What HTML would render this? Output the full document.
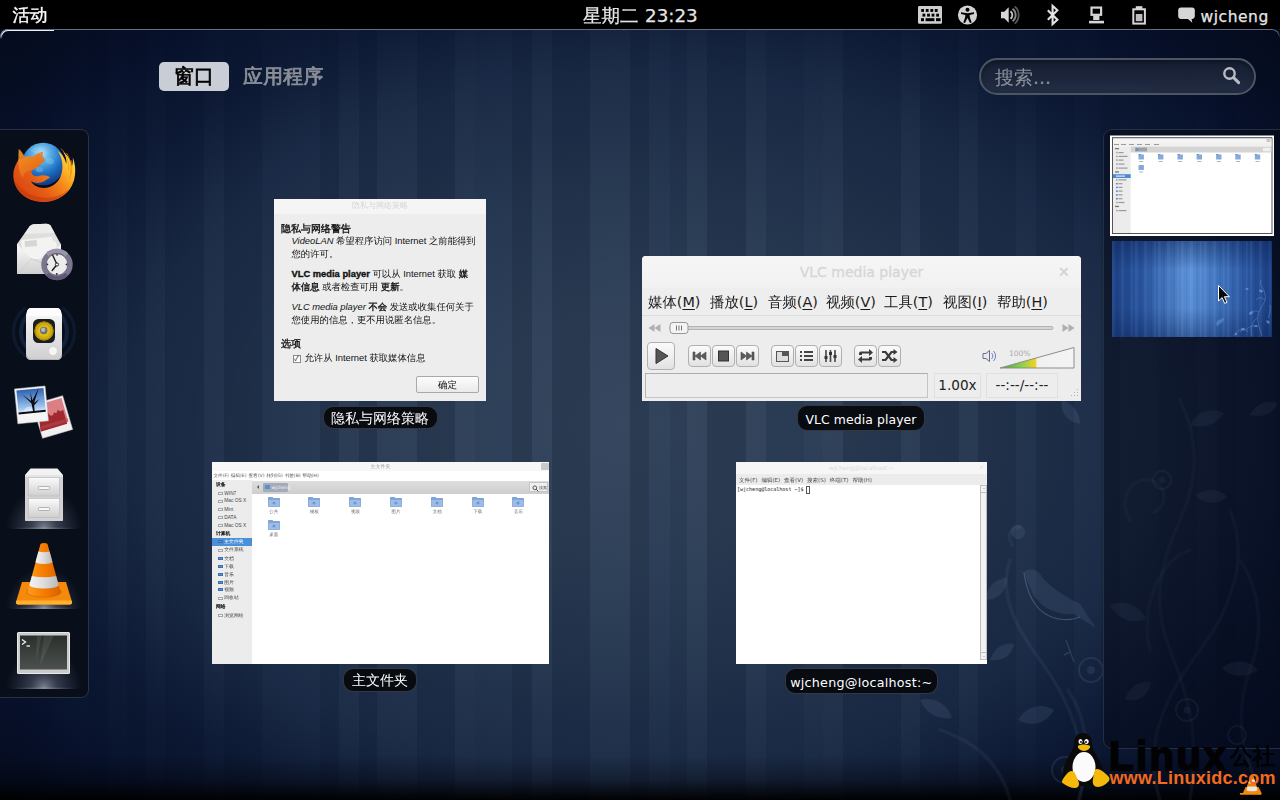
<!DOCTYPE html>
<html lang="zh-CN">
<head>
<meta charset="utf-8">
<title>活动 - GNOME Shell</title>
<style>
html,body{margin:0;padding:0;}
body{width:1280px;height:800px;overflow:hidden;position:relative;background:#14233f;
  font-family:"DejaVu Sans","WenQuanYi Zen Hei","Noto Sans CJK SC",sans-serif;color:#fff;}
.abs{position:absolute;}
#bg{left:0;top:0;width:1280px;height:800px;
  background:
   linear-gradient(to bottom, rgba(0,0,0,0) 0px, rgba(0,0,0,0) 755px, rgba(0,0,0,0.3) 780px, rgba(0,0,0,0.75) 794px, rgba(0,0,0,0.95) 800px),
   radial-gradient(ellipse 928px 640px at 640px 425px, rgba(3,20,56,0) 0%, rgba(3,20,56,0.09) 20%, rgba(3,17,49,0.227) 35%, rgba(3,17,49,0.477) 55%, rgba(3,14,42,0.77) 68%, rgba(3,12,38,0.91) 79%, rgba(3,10,30,0.955) 88%, rgba(3,7,22,1) 100%),
   linear-gradient(to right,rgba(255,255,255,0.030) 0px,rgba(255,255,255,0.030) 11.7px,rgba(0,0,0,0.040) 11.7px,rgba(0,0,0,0.040) 50.3px,rgba(255,255,255,0.014) 50.3px,rgba(255,255,255,0.014) 88.9px,rgba(0,0,0,0.085) 88.9px,rgba(0,0,0,0.085) 108.2px,rgba(255,255,255,0.030) 108.2px,rgba(255,255,255,0.030) 127.5px,rgba(0,0,0,0.085) 127.5px,rgba(0,0,0,0.085) 146px,rgba(255,255,255,0.030) 146px,rgba(255,255,255,0.030) 165px,rgba(0,0,0,0.085) 165px,rgba(0,0,0,0.085) 204px,rgba(255,255,255,0.030) 204px,rgba(255,255,255,0.030) 224px,rgba(0,0,0,0.085) 224px,rgba(0,0,0,0.085) 262.5px,rgba(255,255,255,0.014) 262.5px,rgba(255,255,255,0.014) 320px,rgba(0,0,0,0.085) 320px,rgba(0,0,0,0.085) 339px,rgba(255,255,255,0.030) 339px,rgba(255,255,255,0.030) 359px,rgba(0,0,0,0.085) 359px,rgba(0,0,0,0.085) 377.5px,rgba(255,255,255,0.030) 377.5px,rgba(255,255,255,0.030) 417.5px,rgba(0,0,0,0.085) 417.5px,rgba(0,0,0,0.085) 455px,rgba(255,255,255,0.030) 455px,rgba(255,255,255,0.030) 475px,rgba(255,255,255,0.014) 475px,rgba(255,255,255,0.014) 512.5px,rgba(0,0,0,0.085) 512.5px,rgba(0,0,0,0.085) 532.5px,rgba(255,255,255,0.030) 532.5px,rgba(255,255,255,0.030) 552.5px,rgba(0,0,0,0.085) 552.5px,rgba(0,0,0,0.085) 590px,rgba(255,255,255,0.030) 590px,rgba(255,255,255,0.030) 630px,rgba(0,0,0,0.085) 630px,rgba(0,0,0,0.085) 649px,rgba(255,255,255,0.014) 649px,rgba(255,255,255,0.014) 670px,rgba(0,0,0,0.040) 670px,rgba(0,0,0,0.040) 687.5px,rgba(255,255,255,0.030) 687.5px,rgba(255,255,255,0.030) 707.5px,rgba(0,0,0,0.085) 707.5px,rgba(0,0,0,0.085) 746px,rgba(255,255,255,0.030) 746px,rgba(255,255,255,0.030) 765.6px,rgba(0,0,0,0.040) 765.6px,rgba(0,0,0,0.040) 804px,rgba(255,255,255,0.014) 804px,rgba(255,255,255,0.014) 823px,rgba(255,255,255,0.030) 823px,rgba(255,255,255,0.030) 843px,rgba(0,0,0,0.085) 843px,rgba(0,0,0,0.085) 900.7px,rgba(255,255,255,0.030) 900.7px,rgba(255,255,255,0.030) 920px,rgba(0,0,0,0.085) 920px,rgba(0,0,0,0.085) 958.6px,rgba(255,255,255,0.030) 958.6px,rgba(255,255,255,0.030) 978px,rgba(0,0,0,0.085) 978px,rgba(0,0,0,0.085) 1016.5px,rgba(255,255,255,0.014) 1016.5px,rgba(255,255,255,0.014) 1036px,rgba(0,0,0,0.085) 1036px,rgba(0,0,0,0.085) 1074.4px,rgba(255,255,255,0.014) 1074.4px,rgba(255,255,255,0.014) 1101px,rgba(0,0,0,0.085) 1101px,rgba(0,0,0,0.085) 1120.3px,rgba(255,255,255,0.014) 1120.3px,rgba(255,255,255,0.014) 1158.9px,rgba(0,0,0,0.040) 1158.9px,rgba(0,0,0,0.040) 1197.5px,rgba(255,255,255,0.030) 1197.5px,rgba(255,255,255,0.030) 1216.8px,rgba(0,0,0,0.085) 1216.8px,rgba(0,0,0,0.085) 1236.1px,rgba(255,255,255,0.014) 1236.1px,rgba(255,255,255,0.014) 1274.7px,rgba(0,0,0,0.040) 1274.7px,rgba(0,0,0,0.040) 1280px),
   linear-gradient(#2f4159,#2f4159);
}
#panel{left:0;top:0;width:1280px;height:29px;background:#000;}
#panel .t{position:absolute;top:0;height:29px;line-height:29px;font-size:17px;color:#e6e6e6;white-space:nowrap;}
#frame{left:0;top:29px;width:1278px;height:40px;border-top:1.5px solid #5f6f85;border-left:1.5px solid #5f6f85;border-right:1.5px solid #5f6f85;border-radius:8px 8px 0 0;
 -webkit-mask-image:linear-gradient(to bottom,#000 0,#000 4px,transparent 9px);mask-image:linear-gradient(to bottom,#000 0,#000 4px,transparent 9px);}
#hot{left:0;top:28.5px;width:52px;height:12px;border-top:2.5px solid #f0f0f0;border-left:2.5px solid #f0f0f0;border-radius:8px 0 0 0;
 -webkit-mask-image:linear-gradient(to bottom,#000 0,#000 5px,transparent 10px);mask-image:linear-gradient(to bottom,#000 0,#000 5px,transparent 10px);}

#tabwin{left:159px;top:62px;width:70px;height:29px;border-radius:5px;background:#c9cdd5;color:#000;font-weight:bold;font-size:20px;line-height:29px;text-align:center;-webkit-text-stroke:0.7px #000;}
#tabapp{left:243px;top:62px;height:29px;line-height:29px;font-size:19.800px;color:#8b8f98;font-weight:bold;white-space:nowrap;-webkit-text-stroke:0.800px #8b8f98;letter-spacing:0.400px;}
#search{left:978.500px;top:58px;width:273.500px;height:32.500px;border:2px solid #4b5564;border-radius:18.500px;background:linear-gradient(to bottom,rgba(22,30,50,0.92),rgba(36,46,68,0.92));box-shadow:inset 0 2px 4px rgba(0,0,0,0.35);}
#search .ph{position:absolute;left:14.500px;top:0.500px;line-height:32px;font-size:19px;color:#8d939c;}
#dash{left:-2px;top:129px;width:89px;height:567px;border:1px solid #2b3342;border-radius:0 8px 8px 0;background:#090e1b;}
#ws{left:1103px;top:129px;width:190px;height:618px;border:1px solid #262f40;border-radius:9px 0 0 9px;background:rgba(4,7,18,0.42);}
.win{position:absolute;background:#ededed;overflow:hidden;}
.lbl{position:absolute;height:24px;line-height:24px;border-radius:10px;background:rgba(6,8,13,0.94);border:1px solid rgba(70,76,88,0.7);color:#fff;font-size:14px;text-align:center;white-space:nowrap;box-sizing:border-box;}

.b{font-weight:bold;-webkit-text-stroke:0.35px currentColor;}
#w1{color:#111;font-size:9.35px;line-height:13px;font-family:"Liberation Sans","WenQuanYi Zen Hei",sans-serif;}
#w1 .tb{position:absolute;left:0;top:0;width:100%;height:14.500px;background:#f5f5f5;color:#d6d6d6;font-size:8px;line-height:14px;text-align:center;}
#w1 p{position:absolute;margin:0;left:17.5px;width:190px;white-space:nowrap;}
#w1 i{font-style:italic;}
#w1 .btn{position:absolute;left:142px;top:177px;width:61px;height:15px;border:1px solid #a9a9a9;border-radius:2px;background:linear-gradient(#fdfdfd,#eaeaea);text-align:center;line-height:15px;font-size:9.6px;}
#w1 .cb{position:absolute;left:18.500px;top:155.600px;width:6px;height:6px;border:1px solid #8a8a8a;background:#fff;font-size:7px;line-height:6px;text-align:center;}

#w2{background:#ededed;border-radius:4px 4px 0 0;color:#1a1a1a;}
#w2 .tb{position:absolute;left:0;top:0;width:100%;height:32px;background:linear-gradient(#f6f6f6,#f1f1f1);color:#d6d6d6;font-size:14px;line-height:32px;text-align:center;}
#w2 .mb{position:absolute;left:0;top:32px;width:100%;height:27px;background:#eeeeee;border-bottom:1px solid #dcdcdc;font-size:14.4px;line-height:28px;}
#w2 .mb span{position:absolute;top:0;white-space:nowrap;}
#w2 .mb u{text-decoration:underline;text-underline-offset:2px;}
#w2 .bt{position:absolute;top:89px;height:20px;width:21px;border:1px solid #b0b0b0;border-radius:4px;background:linear-gradient(#fbfbfb,#e2e2e2);box-sizing:content-box;}
#w2 .bx{position:absolute;top:117px;height:23px;border:1px solid #c4c4c4;border-top-color:#adadad;border-left-color:#b4b4b4;background:#ededed;font-size:13.6px;line-height:23px;text-align:center;color:#222;}

#w3{font-size:4.8px;line-height:8px;color:#444;}
#w3 .tb{position:absolute;left:0;top:0;width:100%;height:9px;background:#f7f7f7;color:#9a9a9a;font-size:5px;line-height:9px;text-align:center;}
#w3 .mb{position:absolute;left:1.5px;top:9px;height:8px;line-height:9px;white-space:nowrap;word-spacing:0.5px;color:#555;font-size:4.6px;}
#w3 .sb{position:absolute;left:0;top:17.7px;width:39.5px;height:184.5px;background:#ececec;}
#w3 .sb div{font-family:"Liberation Sans","WenQuanYi Zen Hei",sans-serif;position:absolute;left:12.3px;white-space:nowrap;height:8px;line-height:8px;}
#w3 .sb div.h{left:4px;font-weight:bold;-webkit-text-stroke:0.25px #222;color:#222;}
#w3 .sb i{position:absolute;left:-6.3px;top:2.2px;width:4.5px;height:3px;border:0.5px solid #a5a5a5;background:#f6f6f6;box-sizing:border-box;}
#w3 .sb i.f{background:#5b8fd0;border-color:#3e6fb0;}
#w3 .tl{position:absolute;left:39.5px;top:18.5px;width:297.5px;height:13px;background:linear-gradient(#dedede,#cdcdcd);}
#w3 .fd{position:absolute;width:40px;text-align:center;top:46px;color:#666;font-size:4.4px;}
#w3 .fd svg{position:absolute;left:14px;top:-12px;}
#w4{font-size:5.5px;color:#333;}
#w4 .tb{position:absolute;left:0;top:0;width:100%;height:11.500px;background:#f6f6f6;color:#dadada;font-size:6px;line-height:11px;text-align:center;}
#w4 .mb{position:absolute;left:0;top:11.500px;width:100%;height:11.500px;line-height:12px;background:#ececec;white-space:nowrap;word-spacing:2.2px;text-indent:3px;color:#444;}
</style>
</head>
<body>
<div id="bg" class="abs"></div>
<div id="panel" class="abs">
  <div class="t" style="left:12.500px;top:1px;color:#fff;font-size:17.500px;-webkit-text-stroke:0.350px #fff;">活动</div>
  <div class="t" style="left:583px;top:0.500px;-webkit-text-stroke:0.250px #e6e6e6;"><span style="font-size:18.500px;">星期二</span><span style="margin-left:6.500px;font-size:18.300px;">23:23</span></div>
  <div class="t" style="left:1201px;font-size:15.500px;letter-spacing:0.550px;top:3px;left:1200.500px;-webkit-text-stroke:0.25px #e6e6e6;">wjcheng</div>
</div>

<svg class="abs" style="left:910px;top:0" width="300" height="29" viewBox="910 0 300 29">
 <!-- keyboard -->
 <rect x="918" y="6" width="24" height="17.800" rx="1.200" fill="#cfcfcf"/>
 <g fill="#000">
  <rect x="921.200" y="9" width="2.800" height="2.900"/><rect x="925.800" y="9" width="2.800" height="2.900"/><rect x="930.400" y="9" width="2.800" height="2.900"/><rect x="934.800" y="9" width="2.800" height="2.900"/>
  <rect x="922.500" y="13.700" width="2.800" height="2.900"/><rect x="927.100" y="13.700" width="2.800" height="2.900"/><rect x="931.600" y="13.700" width="2.800" height="2.900"/><rect x="936.200" y="13.700" width="2.800" height="2.900"/>
  <rect x="921" y="18.200" width="3" height="3"/><rect x="925.600" y="18.200" width="8.800" height="3"/><rect x="936" y="18.200" width="4.600" height="3"/>
 </g>
 <!-- accessibility -->
 <circle cx="967.500" cy="15" r="9.600" fill="#d2d2d2"/>
 <circle cx="967.500" cy="9.800" r="2" fill="#000"/>
 <path d="M961 12.200l6.500 1 6.500-1v1.800l-4.400 1 .3 2.500 1.800 5-1.700.6-2.500-5-2.500 5-1.700-.6 1.800-5 .3-2.500-4.400-1z" fill="#000"/>
 <!-- volume -->
 <path d="M1001 11.800h3.300l4.400-4.600v15.600l-4.400-4.600h-3.300z" fill="#d6d6d6"/>
 <path d="M1010.500 11.200a4.800 4.800 0 0 1 0 7.600" fill="none" stroke="#c8c8c8" stroke-width="1.800"/>
 <path d="M1012.600 8.700a8 8 0 0 1 0 12.600" fill="none" stroke="#8a8a8a" stroke-width="1.800"/>
 <path d="M1014.700 6.400a11.200 11.200 0 0 1 0 17.200" fill="none" stroke="#555" stroke-width="1.800"/>
 <!-- bluetooth -->
 <path d="M1047.800 10.200l9.600 9.600-4.800 4.400v-18.400l4.800 4.400-9.600 9.600" fill="none" stroke="#e4e4e4" stroke-width="2.100" stroke-linejoin="miter"/>
 <!-- network -->
 <rect x="1091.500" y="7.600" width="9.600" height="7.200" fill="none" stroke="#d6d6d6" stroke-width="2.200"/>
 <rect x="1093.200" y="15.500" width="6.200" height="4.500" fill="#d6d6d6"/>
 <rect x="1089" y="20.800" width="15" height="2.600" fill="#d6d6d6"/>
 <!-- battery -->
 <rect x="1135.800" y="6.200" width="6.600" height="3" fill="#d6d6d6"/>
 <rect x="1133.300" y="9.300" width="11.600" height="14.300" fill="none" stroke="#d6d6d6" stroke-width="2"/>
 <rect x="1135.800" y="14" width="6.600" height="7.200" fill="#bdbdbd"/>
 <!-- chat bubble -->
 <path d="M1181 7.500h11a2.800 2.800 0 0 1 2.800 2.800v5.800a2.800 2.800 0 0 1-2.800 2.800h-.5l.8 3.800-4.300-3.800h-7a2.800 2.800 0 0 1-2.800-2.800v-5.800a2.800 2.800 0 0 1 2.800-2.800z" fill="#d6d6d6"/>
</svg>
<div id="hot" class="abs"></div>
<div id="frame" class="abs"></div>


<svg id="floral" class="abs" style="left:880px;top:380px" width="400" height="420" viewBox="880 380 400 420">
<g fill="none" stroke="#8aa4d0" stroke-opacity="0.070" stroke-width="3.500" stroke-linecap="round">
 <path d="M1180 400c20 40 18 80 0 120s-30 80-10 130 30 90 20 150"/>
 <path d="M1160 800c-20-60 10-110 40-150s50-90 30-140"/>
 <path d="M1130 520c-12-20 0-42 18-40s22 26 6 32"/>
 <path d="M1150 650c-10-40 8-90 40-100"/>
 <path d="M1080 800c10-50-10-100-40-140s-40-70-30-100"/>
 <path d="M1010 800c-10-40-40-60-70-70"/>
 <path d="M1068 690c20 30 24 70 10 110"/>
 <path d="M1240 560c20 30 25 70 10 110s-10 80 10 120"/>
 <path d="M1012 545c-6-10 0-20 8-18"/>
</g>
<g fill="none" stroke="#8aa4d0" stroke-opacity="0.130" stroke-width="2">
 <circle cx="1162" cy="480" r="9"/><circle cx="1091" cy="670" r="12"/><circle cx="1187" cy="710" r="11"/><circle cx="1065" cy="770" r="13"/><circle cx="1237" cy="735" r="9"/>
</g>
<g fill="#8aa4d0" fill-opacity="0.120">
 <circle cx="1162" cy="480" r="3"/><circle cx="1091" cy="670" r="4"/><circle cx="1187" cy="710" r="3.500"/><circle cx="1065" cy="770" r="4"/><circle cx="1018" cy="532" r="7"/>
 <path d="M1062 400c12 4 18 14 18 24-12-2-20-10-18-24z"/>
 <path d="M1190 425c8-14 22-18 34-12-8 12-20 16-34 12z"/>
 <path d="M1250 415c6-12 18-16 28-12-6 12-16 15-28 12z"/>
 <path d="M1195 495c12-8 26-6 32 2-10 8-22 8-32-2z"/>
 <path d="M985 600c2-14 12-22 22-22 0 12-8 22-22 22z"/>
 <path d="M1110 605c14-6 30 0 36 14-14 6-28 0-36-14z"/>
 <path d="M1222 668c12-10 28-8 36 2-12 8-26 8-36-2z"/>
 <path d="M1018 720c8-14 24-18 36-10-8 14-22 18-36 10z"/>
 <path d="M920 700c14-4 28 4 32 18-14 2-26-4-32-18z"/>
 <path d="M990 660c4-12 14-18 24-16-2 12-12 18-24 16z"/>
 <path d="M1125 700c4-14 16-20 26-18-2 14-12 20-26 18z"/>
 <path d="M1016 571l8 1c4-4 12-4 16 2 8 12 24 22 40 30l16 24-22-14c-16 2-34-6-42-22-4-8-6-14-8-19z"/>
</g>
<path d="M1024 573c2 14 6 30 20 40 12 8 26 8 36 4" fill="none" stroke="#a9bfe4" stroke-opacity="0.250" stroke-width="1.200"/>
<path d="M1066 640l8 22M1070 652l-6 3" fill="none" stroke="#8aa4d0" stroke-opacity="0.180" stroke-width="1.500"/>
</svg>
<div id="tabwin" class="abs">窗口</div>
<div id="tabapp" class="abs">应用程序</div>
<div id="search" class="abs"><span class="ph">搜索...</span>
<svg class="abs" style="left:240.500px;top:5.200px" width="22" height="22" viewBox="0 0 22 22"><circle cx="8.5" cy="8.5" r="5.2" fill="none" stroke="#b9bcc2" stroke-width="2.4"/><path d="M12.6 12.6 L17.6 17.6" stroke="#b9bcc2" stroke-width="3" stroke-linecap="round"/></svg>
</div>
<div id="dash" class="abs"></div>

<svg id="dashicons" class="abs" style="left:0;top:130px" width="88" height="568" viewBox="0 130 88 568">
<defs>
 <radialGradient id="ffg" cx="0.45" cy="0.25" r="0.8"><stop offset="0" stop-color="#bfe6f7"/><stop offset="0.25" stop-color="#5fb3e6"/><stop offset="0.6" stop-color="#1f6fc4"/><stop offset="1" stop-color="#0d2f7a"/></radialGradient>
 <linearGradient id="fox" x1="0.05" y1="0.85" x2="0.95" y2="0.2"><stop offset="0" stop-color="#d5430f"/><stop offset="0.35" stop-color="#e65c16"/><stop offset="0.62" stop-color="#f58618"/><stop offset="0.85" stop-color="#fdbb2a"/><stop offset="1" stop-color="#ffdc45"/></linearGradient>
 <linearGradient id="foxh" x1="0" y1="0" x2="1" y2="1"><stop offset="0" stop-color="#f79a2a"/><stop offset="1" stop-color="#e0570f"/></linearGradient>
 <radialGradient id="glow" cx="0.5" cy="1" r="0.5" gradientTransform="matrix(1 0 0 2 0 -1)"><stop offset="0" stop-color="#d0d4e0" stop-opacity="0.6"/><stop offset="0.35" stop-color="#8e96ae" stop-opacity="0.34"/><stop offset="0.75" stop-color="#8088a0" stop-opacity="0.12"/><stop offset="1" stop-color="#8088a0" stop-opacity="0"/></radialGradient>
 <linearGradient id="gline" x1="0" y1="0" x2="1" y2="0"><stop offset="0" stop-color="#cfd4e2" stop-opacity="0"/><stop offset="0.5" stop-color="#dfe3ee" stop-opacity="0.55"/><stop offset="1" stop-color="#cfd4e2" stop-opacity="0"/></linearGradient>
 <linearGradient id="wht" x1="0" y1="0" x2="0" y2="1"><stop offset="0" stop-color="#fbfbfb"/><stop offset="1" stop-color="#cfcfcf"/></linearGradient>
 <linearGradient id="cone" x1="0" y1="0" x2="1" y2="0"><stop offset="0" stop-color="#ff9d1c"/><stop offset="0.5" stop-color="#f57c00"/><stop offset="1" stop-color="#d95f00"/></linearGradient>
 <linearGradient id="conew" x1="0" y1="0" x2="1" y2="0"><stop offset="0" stop-color="#f4f4f4"/><stop offset="0.5" stop-color="#dcdcdc"/><stop offset="1" stop-color="#b9b9b9"/></linearGradient>
 <linearGradient id="scr" x1="0" y1="0" x2="0" y2="1"><stop offset="0" stop-color="#2a2f2c"/><stop offset="1" stop-color="#4b514e"/></linearGradient>
 <linearGradient id="sky" x1="0" y1="0" x2="0" y2="1"><stop offset="0" stop-color="#2f62b0"/><stop offset="0.75" stop-color="#9cc3ee"/><stop offset="1" stop-color="#e8f2fb"/></linearGradient>
</defs>
<!-- firefox -->
<circle cx="43.200" cy="164" r="21.300" fill="url(#ffg)"/>
<path d="M30 150c3-3 8-4 12-3 3 2 2 5-1 6-4 1-8 0-11-3zM46 158c3-1 7 0 8 3 0 3-3 4-6 3-2-1-3-4-2-6zM36 168c2-2 6-1 7 1s-2 4-5 3c-2 0-3-2-2-4z" fill="#8fd0f0" opacity="0.350"/>
<path d="M18.800 149c.3 2.500 1.200 5 3 7-5 5-8.500 12-8.500 20 .5 14 12 25.500 29 26 15 .3 27.500-8 31.500-21 2.500-9 1.500-17-1-23.500.3 3.500 0 6.500-1 9-1-6-4-11.500-8.500-14.500 2.500 4 3.500 8 3 12-1-5-4-10-8.500-13 4.500 7 5.500 14.500 4 21.500-2 10-10 15.500-18 15.500-6 0-11-3-13-7 4 2.500 9 2.500 13 .5 2.500-1.500 4-3.500 6.500-4-3.500-2.500-8-3-11.500-1.500-3.500 1-6.500-.5-7.500-3.500 0-3 2.500-4.500 5.500-4.500 1-2 3-4 5.500-5l-1.500-3c-1.500-2-1.500-4-.5-6-4.500.5-8 2.500-10 5-3.500-1-7-1-9.500-.200-1.500-3-1.500-6-2-9z" fill="url(#fox)"/>
<path d="M18.800 149c2.500 2 4.500 4.500 5.500 7.500 2.500-.8 6-.8 9 .200 2-2.500 5.500-4.500 10-5-1 2-1 4 .5 6l1.500 3c-2.500 1-4.500 3-5.500 5-3 0-5.500 1.500-5.500 4.500-6-1-10.500 2-11.500 8-3.500-6-5-12.500-4.500-18 .3-3.500 0-7 .5-11.200z" fill="url(#foxh)" opacity="0.850"/>
<path d="M61 148.500c5 5 8.500 13 7.500 22M66.500 153c4 6 5.500 14 3.500 22M71 160c1.500 6 1 13-1.500 19" fill="none" stroke="#f08a10" stroke-width="1" opacity="0.700"/>
<path d="M13.500 178c2 12 13 22.500 28.500 23.500 11 .5 21-4 27-12-7 6-16 9-26 8-14-1-25-9-29.500-19.500z" fill="#c22f0c" opacity="0.450"/>
<!-- mail + clock -->
<path d="M17 244l12.500-17.500q1.500-2 4-2.200l13-.600q2.500 0 4 1.800l10.500 19v29h-44z" fill="#dededc"/>
<path d="M29.500 226.500q1.500-2 4-2.200l13-.600q2.500 0 4 1.800l4 7.500-30 1z" fill="#ececea"/>
<path d="M21 240l33-3.500 3 8.500-4 14h-30z" fill="#f3f3f1"/>
<path d="M24.500 241.300l12-1.200.6 5.800-12 1.200z" fill="#d6d6d6"/>
<path d="M52 236.500l4 1.500 1 5-5-3z" fill="#e2e2e0"/>
<path d="M17 243.800l13.500 14.500 4 2.500 9-4 17.500-12v29.200h-44z" fill="url(#wht)"/>
<path d="M17.500 273.500l14-14.500M30.500 258.300l12 5" stroke="#c8c8c6" stroke-width="0.700" fill="none"/>
<circle cx="57" cy="264.500" r="15.700" fill="#7b768f"/>
<path d="M45.900 253.400a15.700 15.700 0 0 1 22.200 0l-2.800 2.800a11.700 11.700 0 0 0-16.600 0z" fill="#9a95ac"/>
<path d="M68.100 275.600a15.700 15.700 0 0 1-22.200 0l2.800-2.800a11.700 11.700 0 0 0 16.600 0z" fill="#5d5873"/>
<circle cx="57" cy="264.500" r="10.800" fill="#ececec" stroke="#55506a" stroke-width="0.800"/>
<path d="M57 264.500l-4.300-9.200M57 264.500l-4.800 6" stroke="#1c1c1c" stroke-width="1.400" stroke-linecap="round"/>
<circle cx="57" cy="264.500" r="1.600" fill="#f4f4f4" stroke="#1c1c1c" stroke-width="0.900"/>
<g fill="#2a2a2a"><circle cx="57" cy="254.800" r="0.900"/><circle cx="56.800" cy="274" r="0.900"/><circle cx="47.400" cy="264.400" r="0.900"/><circle cx="66.500" cy="264.400" r="0.900"/></g>
<!-- rhythmbox -->
<g fill="none" stroke="#1b3358" opacity="0.550" stroke-linecap="round"><path d="M58.800 314.400a23 23 0 0 1 0 35.200M29.200 314.400a23 23 0 0 0 0 35.200" stroke-width="4"/><path d="M63.600 308.600a30.500 30.500 0 0 1 0 46.800M24.400 308.600a30.500 30.500 0 0 0 0 46.800" stroke-width="3" opacity="0.600"/></g>
<path d="M31 308h26q3 0 4 3.500l1 5v38q0 5.500-5.500 5.500h-25q-5.500 0-5.500-5.500v-38l1-5q1-3.500 4-3.500z" fill="url(#wht)"/>
<path d="M31 308h26q3 0 4 3.500l1 4.500h-36l1-4.500q1-3.500 4-3.500z" fill="#fdfdfd"/>
<path d="M26.500 354.500q0 5 5 5h25q5 0 5-5" fill="none" stroke="#b5b5b5" stroke-width="1"/>
<rect x="33" y="319" width="22" height="24" rx="5.500" fill="#1c1d22"/>
<circle cx="44" cy="331" r="9.600" fill="#cfaa0e"/>
<circle cx="44" cy="331" r="9.100" fill="none" stroke="#9c7f00" stroke-width="1"/>
<circle cx="44" cy="331" r="6" fill="#dfbd1a"/>
<circle cx="43.700" cy="330.500" r="3.700" fill="#6f6f6f"/><circle cx="43.200" cy="329.800" r="2.200" fill="#b4b8b8"/>
<circle cx="53" cy="351" r="4.400" fill="#f6f6f6" stroke="#d2d2d2" stroke-width="0.800"/>
<!-- shotwell -->
<g transform="translate(52.600 417) rotate(-16.500)"><rect x="-15.700" y="-17.600" width="31.400" height="35.200" fill="#f0f0f0" stroke="#c4c4c4" stroke-width="0.500"/><rect x="-13.900" y="-15.800" width="27.800" height="24.500" fill="#dc7f84"/><path d="M-13.900 1l2.500-1.500 1.500 1 1.500-3 1.500 2 2-1 1.500-4.500 1.500 4 2.500.5 2-2.500 2 1.500 2.500-3 2 2.500 3 -1v14.700h-27.800z" fill="#9e2a30"/><path d="M-13.900 5.500h27.800v3.200h-27.800z" fill="#b8464c" opacity="0.600"/></g>
<g transform="translate(31.450 404.900) rotate(-5.500)"><rect x="-15.350" y="-17.500" width="30.700" height="35" fill="#f4f4f4" stroke="#c9c9c9" stroke-width="0.500"/><rect x="-13.600" y="-15.700" width="27.200" height="24" fill="url(#sky)"/><circle cx="-3" cy="6.500" r="5" fill="#fff" opacity="0.450"/><path d="M-13.600 6.300h27.200v2h-27.200z" fill="#0b0d12"/><path d="M1 6.500l-.8-8-8-9.500 7.800 7 .2-9 1.200 8.500 7.500-11.500-6 14 5.500-3-5.800 5.800v5.700z" fill="#0b0d12"/></g>
<!-- file cabinet -->
<rect x="6" y="488" width="76" height="40.500" fill="url(#glow)"/><rect x="10" y="527.800" width="68" height="1" fill="url(#gline)"/>
<path d="M30.500 468.500h27l5.500 6.500h-38z" fill="#f2f2f2"/>
<rect x="25" y="475" width="38" height="46" rx="0.800" fill="#d2d2d2"/>
<rect x="25" y="475" width="38" height="2" fill="#e4e4e4"/>
<rect x="28.500" y="477.500" width="31" height="18.500" fill="url(#wht)" stroke="#b8b8b8" stroke-width="0.600"/>
<rect x="28.500" y="498.500" width="31" height="19" fill="url(#wht)" stroke="#b8b8b8" stroke-width="0.600"/>
<rect x="38.500" y="486.500" width="11" height="3" rx="0.800" fill="#f8f8f8" stroke="#9a9a9a" stroke-width="0.700"/>
<rect x="38.500" y="507.500" width="11" height="3" rx="0.800" fill="#f8f8f8" stroke="#9a9a9a" stroke-width="0.700"/>
<!-- vlc -->
<rect x="6" y="568" width="76" height="40.500" fill="url(#glow)"/><rect x="10" y="607.800" width="68" height="1" fill="url(#gline)"/>
<path d="M22 582h44l6 20a2 2 0 0 1-2 2.500h-52a2 2 0 0 1-2-2.500z" fill="#f58a0a"/>
<path d="M16.500 600.500h55l.5 2a2 2 0 0 1-2 2h-52a2 2 0 0 1-2-2z" fill="#ffb12e"/>
<ellipse cx="44" cy="592" rx="17.500" ry="5.500" fill="#d96a00"/>
<path d="M40.200 545a3.800 2 0 0 1 7.600 0l12.700 47a16.500 4.800 0 0 1-33 0z" fill="url(#cone)"/>
<path d="M38.400 551.500q5.600 1.500 11.200 0l2.900 10.500a8.700 2.500 0 0 1-17 0z" fill="url(#conew)"/>
<path d="M31.900 576q12 2.500 24.200 0l2.500 9a14.500 3.500 0 0 1-29.200 0z" fill="url(#conew)"/>
<!-- terminal -->
<rect x="6" y="648" width="76" height="40.500" fill="url(#glow)"/><rect x="10" y="687.800" width="68" height="1" fill="url(#gline)"/>
<rect x="17" y="632" width="53" height="42" rx="1.500" fill="#cbcbcb"/>
<rect x="17.500" y="632.500" width="52" height="41" rx="1.500" fill="none" stroke="#e9e9e9" stroke-width="1"/>
<rect x="20" y="635.500" width="47" height="34" fill="url(#scr)"/>
<path d="M37 635.500h5l-6 26zM44 635.500h10l-14 30z" fill="#fff" opacity="0.080"/>
<path d="M22 639.500l3.500 2.500-3.500 2.500" fill="none" stroke="#f0f0f0" stroke-width="1.300"/>
<path d="M26.500 646h3.500" stroke="#f0f0f0" stroke-width="1.300"/>
</svg>
<div id="ws" class="abs"></div>


<svg class="abs" style="left:1104px;top:130px" width="176" height="215" viewBox="1104 130 176 215">
<defs>
 <linearGradient id="wp" x1="0" y1="0" x2="1" y2="0"><stop offset="0" stop-color="#1d4388"/><stop offset="0.2" stop-color="#2c5aa6"/><stop offset="0.48" stop-color="#5f97e0"/><stop offset="0.62" stop-color="#4a80cc"/><stop offset="0.85" stop-color="#2a58a4"/><stop offset="1" stop-color="#1c4186"/></linearGradient>
 <linearGradient id="wpv" x1="0" y1="0" x2="0" y2="1"><stop offset="0" stop-color="#0c245a" stop-opacity="0.55"/><stop offset="0.3" stop-color="#0c245a" stop-opacity="0.05"/><stop offset="0.7" stop-color="#0c245a" stop-opacity="0.1"/><stop offset="1" stop-color="#0c245a" stop-opacity="0.5"/></linearGradient>
 <pattern id="wps" x="1112" y="0" width="23" height="10" patternUnits="userSpaceOnUse"><rect x="0" y="0" width="2.500" height="10" fill="#fff" opacity="0.060"/><rect x="5" y="0" width="1.500" height="10" fill="#000" opacity="0.060"/><rect x="9" y="0" width="3" height="10" fill="#fff" opacity="0.050"/><rect x="15" y="0" width="2" height="10" fill="#000" opacity="0.050"/><rect x="19" y="0" width="1.500" height="10" fill="#fff" opacity="0.060"/></pattern>
</defs>
<rect x="1111" y="136.500" width="162" height="98.500" fill="none" stroke="#fff" stroke-width="2"/>
<rect x="1112.500" y="138" width="159.500" height="95.500" fill="#fff" stroke="#555" stroke-width="1"/>
<rect x="1113" y="138.500" width="158.500" height="4" fill="#f4f4f4"/>
<rect x="1266.500" y="138.500" width="4" height="3.500" fill="#c9c9c9"/>
<rect x="1113" y="142.500" width="158.500" height="3.800" fill="#f0f0f0"/>
<g fill="#9c9c9c"><rect x="1114" y="144" width="5" height="1"/><rect x="1121" y="144" width="5" height="1"/><rect x="1129" y="144" width="5" height="1"/><rect x="1137" y="144" width="5" height="1"/><rect x="1145" y="144" width="5" height="1"/><rect x="1154" y="144" width="5" height="1"/></g>
<rect x="1113" y="146.300" width="17.700" height="86.700" fill="#ececec"/>
<rect x="1130.700" y="146.500" width="140.800" height="6" fill="#d4d4d4"/>
<rect x="1135" y="147.500" width="12" height="4" fill="#9ea3aa"/><rect x="1136" y="148.300" width="2.500" height="2.400" fill="#5b8fd0"/>
<rect x="1262.500" y="147.300" width="8.500" height="4.500" fill="#f0f0f0" stroke="#c4c4c4" stroke-width="0.400"/>
<rect x="1138.5" y="154.500" width="5.400" height="5" fill="#86a9d8"/><rect x="1138.5" y="154" width="2.400" height="1" fill="#6d93c8"/><rect x="1139.2" y="161" width="4" height="1" fill="#b5b5b5"/><rect x="1158.0" y="154.500" width="5.400" height="5" fill="#86a9d8"/><rect x="1158.0" y="154" width="2.400" height="1" fill="#6d93c8"/><rect x="1158.7" y="161" width="4" height="1" fill="#b5b5b5"/><rect x="1177.5" y="154.500" width="5.400" height="5" fill="#86a9d8"/><rect x="1177.5" y="154" width="2.400" height="1" fill="#6d93c8"/><rect x="1178.2" y="161" width="4" height="1" fill="#b5b5b5"/><rect x="1196.6" y="154.500" width="5.400" height="5" fill="#86a9d8"/><rect x="1196.6" y="154" width="2.400" height="1" fill="#6d93c8"/><rect x="1197.3" y="161" width="4" height="1" fill="#b5b5b5"/><rect x="1216.1" y="154.500" width="5.400" height="5" fill="#86a9d8"/><rect x="1216.1" y="154" width="2.400" height="1" fill="#6d93c8"/><rect x="1216.8" y="161" width="4" height="1" fill="#b5b5b5"/><rect x="1235.3" y="154.500" width="5.400" height="5" fill="#86a9d8"/><rect x="1235.3" y="154" width="2.400" height="1" fill="#6d93c8"/><rect x="1236.0" y="161" width="4" height="1" fill="#b5b5b5"/><rect x="1254.8" y="154.500" width="5.400" height="5" fill="#86a9d8"/><rect x="1254.8" y="154" width="2.400" height="1" fill="#6d93c8"/><rect x="1255.5" y="161" width="4" height="1" fill="#b5b5b5"/><rect x="1138.500" y="165" width="5.400" height="5" fill="#86a9d8"/><rect x="1139.200" y="171.500" width="4" height="1" fill="#b5b5b5"/>
<rect x="1115" y="148.0" width="4" height="1.300" fill="#777"/><rect x="1116" y="151.8" width="1.800" height="1.600" fill="#aaa"/><rect x="1118.500" y="152.0" width="5" height="1.200" fill="#9a9a9a"/><rect x="1116" y="155.60000000000002" width="1.800" height="1.600" fill="#aaa"/><rect x="1118.500" y="155.8" width="9" height="1.200" fill="#9a9a9a"/><rect x="1116" y="159.3" width="1.800" height="1.600" fill="#aaa"/><rect x="1118.500" y="159.5" width="5" height="1.200" fill="#9a9a9a"/><rect x="1116" y="163.3" width="1.800" height="1.600" fill="#aaa"/><rect x="1118.500" y="163.5" width="6" height="1.200" fill="#9a9a9a"/><rect x="1116" y="167.3" width="1.800" height="1.600" fill="#aaa"/><rect x="1118.500" y="167.5" width="9" height="1.200" fill="#9a9a9a"/><rect x="1115" y="171.3" width="4" height="1.300" fill="#777"/><rect x="1113" y="174.2" width="17.700" height="3.800" fill="#4a8ad4"/><rect x="1116" y="175.5" width="9" height="1.200" fill="#dfeaf8"/><rect x="1116" y="179.10000000000002" width="1.800" height="1.600" fill="#aaa"/><rect x="1118.500" y="179.3" width="8" height="1.200" fill="#9a9a9a"/><rect x="1116" y="182.9" width="1.800" height="1.600" fill="#5b8fd0"/><rect x="1118.500" y="183.1" width="4" height="1.200" fill="#9a9a9a"/><rect x="1116" y="186.60000000000002" width="1.800" height="1.600" fill="#5b8fd0"/><rect x="1118.500" y="186.8" width="4" height="1.200" fill="#9a9a9a"/><rect x="1116" y="190.3" width="1.800" height="1.600" fill="#5b8fd0"/><rect x="1118.500" y="190.5" width="4" height="1.200" fill="#9a9a9a"/><rect x="1116" y="194.10000000000002" width="1.800" height="1.600" fill="#5b8fd0"/><rect x="1118.500" y="194.3" width="4" height="1.200" fill="#9a9a9a"/><rect x="1116" y="197.9" width="1.800" height="1.600" fill="#5b8fd0"/><rect x="1118.500" y="198.1" width="4" height="1.200" fill="#9a9a9a"/><rect x="1116" y="201.70000000000002" width="1.800" height="1.600" fill="#aaa"/><rect x="1118.500" y="201.9" width="6" height="1.200" fill="#9a9a9a"/><rect x="1115" y="205.8" width="4" height="1.300" fill="#777"/><rect x="1116" y="209.8" width="1.800" height="1.600" fill="#aaa"/><rect x="1118.500" y="210.0" width="8" height="1.200" fill="#9a9a9a"/>
<rect x="1112" y="241" width="160" height="96" fill="url(#wp)"/>
<rect x="1112" y="241" width="160" height="96" fill="url(#wpv)"/><rect x="1112" y="241" width="160" height="96" fill="url(#wps)"/>
<g fill="none" stroke="#6f9ad6" stroke-width="0.700" opacity="0.600">
 <path d="M1262 336c-3-10-6-16-3-24s8-10 6-18-6-8-4-14"/>
 <path d="M1252 336c-2-8 0-14 5-18M1246 330c3-4 8-5 12-3M1259 312c-4-2-8-1-10 2M1265 300c-3-3-7-3-9 0M1268 318c2-4 3-9 2-13"/>
 <path d="M1240 332c3-3 6-3 8 0M1234 336c2-5 6-7 10-6"/>
</g>
<g fill="#7ea6dc" opacity="0.600"><ellipse cx="1251" cy="313" rx="2.200" ry="1.400" transform="rotate(-30 1251 313)"/><ellipse cx="1261" cy="291" rx="2.200" ry="1.300" transform="rotate(20 1261 291)"/><ellipse cx="1268" cy="322" rx="2" ry="1.300" transform="rotate(40 1268 322)"/><ellipse cx="1243" cy="329" rx="2" ry="1.200"/><ellipse cx="1247" cy="289" rx="1.600" ry="1"/><ellipse cx="1256" cy="326" rx="1.600" ry="1"/><circle cx="1236" cy="334" r="1.200"/>
 <path d="M1216 323c2-3 4-4 6-4l1.500-1.500.5 1.500c0 2-2 4-4 4.500l-3 3z" fill="#5f8fd0"/></g>
<!-- cursor -->
<path d="M1218.500 285.500v15.500l3.600-3.400 2.600 5.800 2.300-1-2.600-5.700h5z" fill="#0a0a0a" stroke="#fff" stroke-width="1" stroke-linejoin="round"/>
</svg>
<div id="w1" class="win" style="left:274px;top:199px;width:212px;height:202px;">
<div class="tb">隐私与网络策略</div>
<p class="b" style="left:7px;top:22.700px;font-size:10px;">隐私与网络警告</p>
<p style="top:36.200px;"><i>VideoLAN</i> 希望程序访问 Internet 之前能得到<br>您的许可。</p>
<p style="top:69.200px;"><span class="b">VLC media player</span> 可以从 Internet 获取 <span class="b">媒</span><br><span class="b">体信息</span> 或者检查可用 <span class="b">更新</span>。</p>
<p style="top:101.700px;"><i>VLC media player</i> <span class="b">不会</span> 发送或收集任何关于<br>您使用的信息，更不用说匿名信息。</p>
<p class="b" style="left:7px;top:137.700px;font-size:10px;">选项</p>
<div class="cb">✓</div>
<p style="left:30.500px;top:152.700px;">允许从 Internet 获取媒体信息</p>
<div class="btn">确定</div>
</div>
<div class="lbl" style="left:322.500px;top:405.500px;width:115px;height:23.500px;line-height:22px;">隐私与网络策略</div>

<div id="w2" class="win" style="left:642px;top:256px;width:439px;height:145px;">
<div class="tb" style="-webkit-text-stroke:0.3px #d6d6d6">VLC media player<span style="position:absolute;left:416px;top:0;font-size:14px;color:#d0d0d0;">✕</span></div>
<div class="mb"><span style="left:6px">媒体(<u>M</u>)</span><span style="left:68px">播放(<u>L</u>)</span><span style="left:126px">音频(<u>A</u>)</span><span style="left:184px">视频(<u>V</u>)</span><span style="left:242px">工具(<u>T</u>)</span><span style="left:301px">视图(<u>I</u>)</span><span style="left:355px">帮助(<u>H</u>)</span></div>
<svg class="abs" style="left:0;top:60px" width="439" height="26" viewBox="0 0 439 26">
 <path d="M12.5 8v8l-6-4zM18.500 8v8l-6-4z" fill="#b0b0b0"/>
 <rect x="28" y="10.500" width="383" height="3" rx="1.500" fill="#d4d4d4" stroke="#a6a6a6" stroke-width="0.800"/>
 <rect x="28" y="6.5" width="18" height="11" rx="3" fill="#f4f4f4" stroke="#979797" stroke-width="1"/>
 <path d="M34.5 9.5v5M37 9.5v5M39.500 9.500v5" stroke="#777" stroke-width="1"/>
 <path d="M420.500 8v8l6-4zM426.500 8v8l6-4z" fill="#b0b0b0"/>
</svg>
<div class="bt" style="left:5px;top:86px;width:26px;height:26px;"><svg width="26" height="26" viewBox="0 0 26 26"><path d="M8 5.500v15l12-7.500z" fill="#555" stroke="#333" stroke-width="1"/></svg></div>
<div class="bt" style="left:46px"><svg width="21" height="20" viewBox="0 0 21 20"><path d="M4 6h2v8h-2zM11.500 6v8l-5.500-4zM17 6v8l-5.500-4z" fill="#5c5c5c" stroke="#4a4a4a" stroke-width="0.6"/></svg></div>
<div class="bt" style="left:70px"><svg width="21" height="20" viewBox="0 0 21 20"><rect x="5.500" y="5" width="10" height="10" fill="#555" stroke="#333"/></svg></div>
<div class="bt" style="left:94px"><svg width="21" height="20" viewBox="0 0 21 20"><path d="M15 6h2v8h-2zM4 6v8l5.500-4zM9.500 6v8l5.500-4z" fill="#5c5c5c" stroke="#4a4a4a" stroke-width="0.6"/></svg></div>
<div class="bt" style="left:129px"><svg width="21" height="20" viewBox="0 0 21 20"><rect x="4.500" y="5.500" width="12" height="10" fill="#ddd" stroke="#555"/><rect x="10" y="6" width="6" height="4" fill="#555"/></svg></div>
<div class="bt" style="left:153px"><svg width="21" height="20" viewBox="0 0 21 20"><path d="M4 5h2v2h-2zM8 5h9v2h-9zM4 9h2v2h-2zM8 9h9v2h-9zM4 13h2v2h-2zM8 13h9v2h-9z" fill="#444"/></svg></div>
<div class="bt" style="left:177px"><svg width="21" height="20" viewBox="0 0 21 20"><path d="M6 4v12M10.500 4v12M15 4v12" stroke="#444" stroke-width="1.600"/><path d="M4.500 10h3v3h-3zM9 6h3v3h-3zM13.500 9h3v3h-3z" fill="#333"/></svg></div>
<div class="bt" style="left:212px"><svg width="21" height="20" viewBox="0 0 21 20"><path d="M4 9v-1.500a2 2 0 0 1 2-2h8v-2.500l4 3.500-4 3.500v-2.500h-7v1.500zM17 11v1.500a2 2 0 0 1-2 2h-8v2.500l-4-3.500 4-3.500v2.500h7v-1.500z" fill="#3c3c3c"/></svg></div>
<div class="bt" style="left:236px"><svg width="21" height="20" viewBox="0 0 21 20"><path d="M3 6h3.500l6 8h3M3 14h3.500l6-8h3" fill="none" stroke="#3c3c3c" stroke-width="2.200"/><path d="M14.500 3l4 3-4 3zM14.500 11l4 3-4 3z" fill="#3c3c3c"/></svg></div>
<svg class="abs" style="left:336px;top:88px" width="100" height="26" viewBox="0 0 100 26">
 <path d="M5 9.500h3l3.500-3v11l-3.500-3h-3z" fill="#e8e8f2" stroke="#6a6e88" stroke-width="1"/>
 <path d="M13.500 9a4 4 0 0 1 0 6M15.500 7a7 7 0 0 1 0 10" fill="none" stroke="#6d7fc0" stroke-width="1"/>
 <defs><linearGradient id="vg" x1="0" x2="1" y1="0" y2="0"><stop offset="0" stop-color="#3da83b"/><stop offset="0.300" stop-color="#8fd04a"/><stop offset="0.480" stop-color="#f5d21f"/><stop offset="0.500" stop-color="#f0f0f0"/><stop offset="1" stop-color="#f4f4f4"/></linearGradient></defs>
 <path d="M22 24l74-20.500v20.500z" fill="url(#vg)" stroke="#8d8d8d" stroke-width="1"/>
 <text x="31" y="11.500" font-size="7.500" fill="#a9a9a9" font-family="'DejaVu Sans',sans-serif">100%</text>
</svg>
<div class="bx" style="left:3px;width:281px;"></div>
<div class="bx" style="left:292px;width:45px;border-color:#e0e0e0;">1.00x</div>
<div class="bx" style="left:344px;width:70px;border-color:#e0e0e0;">--:--/--:--</div>
<svg class="abs" style="left:426px;top:131px" width="12" height="12" viewBox="0 0 12 12"><path d="M9 2h1v1h-1zM6 5h1v1h-1zM9 5h1v1h-1zM3 8h1v1h-1zM6 8h1v1h-1zM9 8h1v1h-1z" fill="#b5b5b5"/></svg>
</div>
<div class="lbl" style="left:797px;top:405px;width:128px;height:26px;line-height:28.500px;font-size:12.400px;letter-spacing:0.100px;overflow:hidden;">VLC media player</div>

<div id="w3" class="win" style="left:212px;top:462px;width:337px;height:201.500px;background:#fff;">
<div class="tb">主文件夹<span style="position:absolute;right:0.500px;top:0.500px;width:7.500px;height:7px;background:#c9c9c9;border-radius:1px;"></span></div>
<div class="mb">文件(F) 编辑(E) 查看(V) 转到(G) 书签(B) 帮助(H)</div>
<div class="sb"><div class="h" style="top:1.8px">设备</div><div style="top:9.9px"><i class=""></i>WIN7</div><div style="top:17.8px"><i class=""></i>Mac OS X</div><div style="top:26.0px"><i class=""></i>Mint</div><div style="top:34.0px"><i class=""></i>DATA</div><div style="top:42.0px"><i class=""></i>Mac OS X</div><div class="h" style="top:50.5px">计算机</div><div style="left:0;top:58.5px;width:39.5px;height:8px;background:#4a90d9;color:#fff;text-indent:12.3px"><i class="f" style="left:6px"></i>主文件夹</div><div style="top:66.7px"><i class=""></i>文件系统</div><div style="top:75.0px"><i class="f"></i>文档</div><div style="top:83.0px"><i class="f"></i>下载</div><div style="top:91.0px"><i class="f"></i>音乐</div><div style="top:99.0px"><i class="f"></i>图片</div><div style="top:106.6px"><i class="f"></i>视频</div><div style="top:114.8px"><i class=""></i>回收站</div><div class="h" style="top:123.3px">网络</div><div style="top:132.0px"><i class=""></i>浏览网络</div></div>
<div class="tl">
 <span style="position:absolute;left:5px;top:4.500px;border:2px solid transparent;border-right:2.500px solid #555;border-left:0;"></span>
 <span style="position:absolute;left:11px;top:2px;width:25px;height:9px;background:#a3abb6;border-radius:1px;color:#f6f6f6;font-size:4.500px;line-height:9px;text-indent:9px;white-space:nowrap;"><span style="position:absolute;left:2px;top:2.500px;width:5px;height:4px;background:#5b8fd0;"></span>wjcheng</span>
 <span style="position:absolute;left:277px;top:1.500px;width:19px;height:10px;background:#efefef;border:0.500px solid #c4c4c4;box-sizing:border-box;border-radius:1px;font-size:4px;line-height:9.500px;text-indent:9.5px;color:#555;white-space:nowrap;">搜索<svg style="position:absolute;left:2px;top:1.500px" width="7" height="7" viewBox="0 0 7 7"><circle cx="2.800" cy="2.800" r="1.900" fill="none" stroke="#444" stroke-width="0.900"/><path d="M4.200 4.200L6.300 6.300" stroke="#444" stroke-width="1"/></svg></span>
</div>
<div class="fd" style="left:41.7px"><svg width="12" height="11" viewBox="0 0 12 11"><path d="M0.500 1.500h4l1 1h6v8h-11z" fill="#7ea6dc" stroke="#5580bd" stroke-width="0.600"/><path d="M0.500 4h11v6.500h-11z" fill="#9dbde6"/><circle cx="6" cy="7" r="1.600" fill="#6f98d2"/></svg>公共</div><div class="fd" style="left:82.4px"><svg width="12" height="11" viewBox="0 0 12 11"><path d="M0.500 1.500h4l1 1h6v8h-11z" fill="#7ea6dc" stroke="#5580bd" stroke-width="0.600"/><path d="M0.500 4h11v6.500h-11z" fill="#9dbde6"/><circle cx="6" cy="7" r="1.600" fill="#6f98d2"/></svg>模板</div><div class="fd" style="left:123.3px"><svg width="12" height="11" viewBox="0 0 12 11"><path d="M0.500 1.500h4l1 1h6v8h-11z" fill="#7ea6dc" stroke="#5580bd" stroke-width="0.600"/><path d="M0.500 4h11v6.500h-11z" fill="#9dbde6"/><circle cx="6" cy="7" r="1.600" fill="#6f98d2"/></svg>视频</div><div class="fd" style="left:163.9px"><svg width="12" height="11" viewBox="0 0 12 11"><path d="M0.500 1.500h4l1 1h6v8h-11z" fill="#7ea6dc" stroke="#5580bd" stroke-width="0.600"/><path d="M0.500 4h11v6.500h-11z" fill="#9dbde6"/><circle cx="6" cy="7" r="1.600" fill="#6f98d2"/></svg>图片</div><div class="fd" style="left:205.2px"><svg width="12" height="11" viewBox="0 0 12 11"><path d="M0.500 1.500h4l1 1h6v8h-11z" fill="#7ea6dc" stroke="#5580bd" stroke-width="0.600"/><path d="M0.500 4h11v6.500h-11z" fill="#9dbde6"/><circle cx="6" cy="7" r="1.600" fill="#6f98d2"/></svg>文档</div><div class="fd" style="left:245.8px"><svg width="12" height="11" viewBox="0 0 12 11"><path d="M0.500 1.500h4l1 1h6v8h-11z" fill="#7ea6dc" stroke="#5580bd" stroke-width="0.600"/><path d="M0.500 4h11v6.500h-11z" fill="#9dbde6"/><circle cx="6" cy="7" r="1.600" fill="#6f98d2"/></svg>下载</div><div class="fd" style="left:286.4px"><svg width="12" height="11" viewBox="0 0 12 11"><path d="M0.500 1.500h4l1 1h6v8h-11z" fill="#7ea6dc" stroke="#5580bd" stroke-width="0.600"/><path d="M0.500 4h11v6.500h-11z" fill="#9dbde6"/><circle cx="6" cy="7" r="1.600" fill="#6f98d2"/></svg>音乐</div><div class="fd" style="left:41.7px;top:69px"><svg width="12" height="11" viewBox="0 0 12 11"><path d="M0.500 1.500h4l1 1h6v8h-11z" fill="#7ea6dc" stroke="#5580bd" stroke-width="0.600"/><path d="M0.500 4h11v6.500h-11z" fill="#9dbde6"/><circle cx="6" cy="7" r="1.600" fill="#6f98d2"/></svg>桌面</div>
</div>
<div class="lbl" style="left:343px;top:668px;width:74px;height:24px;line-height:22.500px;">主文件夹</div>

<div id="w4" class="win" style="left:736px;top:462px;width:251px;height:201.500px;background:#fff;">
<div class="tb">wjcheng@localhost:~<span style="position:absolute;right:3.500px;top:0;color:#dcdcdc;font-size:5px">✕</span></div>
<div class="mb">文件(F) 编辑(E) 查看(V) 搜索(S) 终端(T) 帮助(H)</div>
<div style="position:absolute;left:1px;top:24px;height:7px;line-height:7px;font-size:5.2px;font-family:'DejaVu Sans Mono','Liberation Mono',monospace;color:#222;white-space:nowrap;letter-spacing:-0.1px;">[wjcheng@localhost ~]$</div>
<div style="position:absolute;left:70.300px;top:24.200px;width:3.800px;height:7.800px;border:0.500px solid #555;box-sizing:border-box;"></div>
<div style="position:absolute;left:244px;top:23px;width:6.500px;height:175px;background:#f2f2f2;border:0.500px solid #bdbdbd;box-sizing:border-box;">
 <span style="position:absolute;left:0;top:0;width:5.500px;height:6px;border-bottom:0.500px solid #bdbdbd;"></span>
 <span style="position:absolute;left:0;bottom:0;width:5.500px;height:6px;border-top:0.500px solid #bdbdbd;"></span>
 <span style="position:absolute;left:1.500px;top:2px;border:1.300px solid transparent;border-bottom:1.600px solid #999;border-top:0;"></span>
 <span style="position:absolute;left:1.500px;bottom:2px;border:1.300px solid transparent;border-top:1.600px solid #999;border-bottom:0;"></span>
</div>
</div>
<div class="lbl" style="left:784.500px;top:668.400px;width:153.500px;height:26px;line-height:28.500px;font-size:12.700px;letter-spacing:0.250px;overflow:hidden;">wjcheng@localhost:~</div>

<div id="wm" class="abs" style="left:1060px;top:728px;width:220px;height:72px;">
<svg class="abs" style="left:0;top:0" width="220" height="72" viewBox="1060 728 220 72">
 <!-- tux -->
 <path d="M1083 733c6 0 9 5 9 11 0 6 6 12 9 20 3 8 2 18-2 22h-34c-3-5-3-14 0-22 3-8 9-14 9-21 0-6 3-10 9-10z" fill="#0a0a0a"/>
 <ellipse cx="1084" cy="767" rx="11.500" ry="15" fill="#fbfbfb"/>
 <ellipse cx="1080.500" cy="741.500" rx="2" ry="2.600" fill="#fff"/><ellipse cx="1086.500" cy="741.500" rx="2.200" ry="2.600" fill="#fff"/>
 <circle cx="1081" cy="742" r="0.900" fill="#000"/><circle cx="1086" cy="742" r="0.900" fill="#000"/>
 <path d="M1078 746c2-2 9-2 12 0 1 2-3 5-6 5s-7-3-6-5z" fill="#f5b90c"/>
 <path d="M1063 779c2-3 5-8 9-8 3 0 4 5 6 9 2 4 1 8-3 8s-8-2-11-4c-3-2-2-3-1-5z" fill="#f5b90c"/>
 <path d="M1108 776c-3-3-7-7-11-7-3 0-3 5-4 10s1 8 5 8 8-3 10-5c2-2 2-4 0-6z" fill="#f5b90c"/>
 <!-- small cone -->
 <path d="M1243 793l2.500-6h13l3 6a1.200 1.200 0 0 1-1 1.800h-19.500a1.200 1.200 0 0 1-1-1.800z" fill="#f58a0a"/>
 <path d="M1250.500 776a1.500 1 0 0 1 3 0l4.500 14.500a6.500 2 0 0 1-12.500 0z" fill="#f57c00"/>
 <path d="M1249.600 779.500h4.800l1.100 3.600a4 1 0 0 1-7 0zM1247.500 786.500h9l1 3.200a5.500 1.500 0 0 1-11 0z" fill="#e8e8e8"/>
</svg>
<div style="position:absolute;left:49px;top:5.5px;font-family:'Liberation Sans',sans-serif;font-weight:bold;font-size:40px;line-height:44px;color:#020204;-webkit-text-stroke:1.800px #020204;letter-spacing:2.500px;white-space:nowrap;">Linux</div>
<div style="position:absolute;left:170px;top:15px;font-family:'WenQuanYi Zen Hei','Noto Sans CJK SC',sans-serif;font-size:22.500px;line-height:28px;color:#020204;-webkit-text-stroke:0.800px #020204;white-space:nowrap;">公社</div>
<div style="position:absolute;left:49.500px;top:38px;font-family:'Liberation Sans',sans-serif;font-weight:bold;font-size:18px;line-height:24px;color:#f26a1b;letter-spacing:0.250px;white-space:nowrap;">www.Linuxidc.com</div>
</div>
</body>
</html>
